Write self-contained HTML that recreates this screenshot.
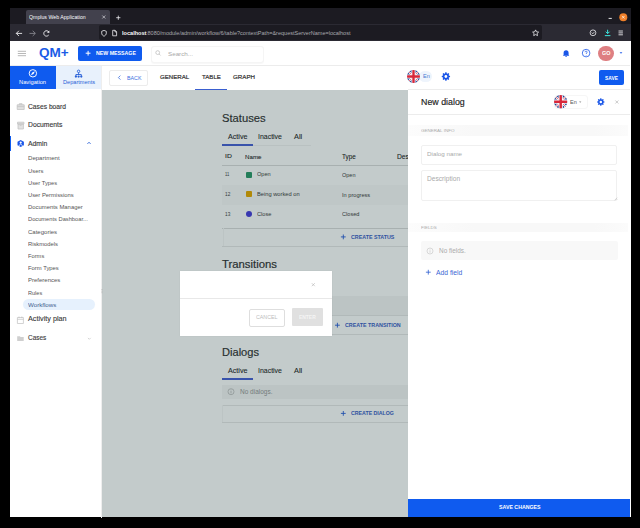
<!DOCTYPE html>
<html><head><meta charset="utf-8"><style>
html,body{margin:0;padding:0;background:#000;width:640px;height:528px;overflow:hidden;font-family:"Liberation Sans",sans-serif}
.r{position:absolute}
.t{position:absolute;white-space:nowrap;line-height:1;transform-origin:0 50%}
svg{position:absolute;overflow:visible}
</style></head><body>
<div class="r" style="left:10px;top:8px;width:620.5px;height:16px;background:#1c1b22;"></div>
<div class="r" style="left:26px;top:10px;width:84px;height:14px;background:#42414d;border-radius:2px 2px 0 0"></div>
<div class="r" style="left:10px;top:24px;width:620.5px;height:16.6px;background:#2b2a33;"></div>
<div class="r" style="left:98.5px;top:25.3px;width:443.5px;height:14.3px;background:#1c1b22;border-radius:2px"></div>
<div class="r" style="left:10px;top:40.6px;width:620.5px;height:476.4px;background:#ffffff;"></div>
<div class="r" style="left:10px;top:65px;width:620px;height:1px;background:#ececec;"></div>
<div class="r" style="left:78px;top:45.5px;width:63.5px;height:15px;background:#0f5bef;border-radius:2px"></div>
<div class="r" style="left:150.5px;top:45.5px;width:113.5px;height:17.5px;background:#fff;border:1px solid #f5f5f5;box-sizing:border-box;border-radius:3px;box-shadow:0 0.5px 1px rgba(0,0,0,0.03)"></div>
<div class="r" style="left:598px;top:45.5px;width:15.5px;height:15.5px;background:#de7f82;border-radius:50%"></div>
<div class="r" style="left:10px;top:65.5px;width:45.5px;height:23px;background:#0f5bef;"></div>
<div class="r" style="left:55.5px;top:65.5px;width:46px;height:23px;background:#e8f1fc;"></div>
<div class="r" style="left:101.3px;top:65.5px;width:0.8px;height:452px;background:#eeeeee;"></div>
<div class="r" style="left:10px;top:136px;width:1.3px;height:15px;background:#0f5bef;"></div>
<div class="r" style="left:22.8px;top:299.2px;width:72.5px;height:11px;background:#e6f1fd;border-radius:6px"></div>
<div class="r" style="left:108.5px;top:70px;width:39.5px;height:15.5px;background:#fff;border:1px solid #ececec;box-sizing:border-box;border-radius:2px"></div>
<div class="r" style="left:195px;top:88.8px;width:31.5px;height:1.2px;background:#3a5fd0;"></div>
<div class="r" style="left:418.5px;top:70.5px;width:13.5px;height:11.5px;background:#eef4fc;border-radius:6px"></div>
<div class="r" style="left:598.5px;top:70px;width:25.5px;height:15px;background:#0f5bef;border-radius:2px"></div>
<div id="content" style="position:absolute;left:0;top:0;width:640px;height:528px">
<div class="r" style="left:221.5px;top:144.3px;width:31.5px;height:1.3px;background:#4b63d6;"></div>
<div class="r" style="left:252.5px;top:144.6px;width:58px;height:0.6px;background:#f2f2f2;"></div>
<div class="r" style="left:221.5px;top:165px;width:187px;height:0.8px;background:#dcdcdc;"></div>
<div class="r" style="left:221.5px;top:184.8px;width:187px;height:20px;background:#fafafa;"></div>
<div class="r" style="left:246px;top:171.5px;width:6.2px;height:6.2px;background:#2f9a6a;border-radius:1px"></div>
<div class="r" style="left:246px;top:191.2px;width:6.2px;height:6.2px;background:#e8a900;border-radius:1px"></div>
<div class="r" style="left:246px;top:211px;width:6.4px;height:6.4px;background:#4a3fdc;border-radius:50%"></div>
<div class="r" style="left:221.5px;top:228.3px;width:187px;height:0.8px;background:#dcdcdc;"></div>
<div class="r" style="left:222.5px;top:228.3px;width:0.8px;height:18px;background:#f6f6f6;"></div>
<div class="r" style="left:221.5px;top:246px;width:187px;height:0.8px;background:#e8e8e8;"></div>
<div class="r" style="left:221.5px;top:295.5px;width:187px;height:20px;background:#f6f6f6;"></div>
<div class="r" style="left:221.5px;top:315.3px;width:187px;height:0.8px;background:#e8e8e8;"></div>
<div class="r" style="left:221.5px;top:334px;width:187px;height:0.8px;background:#e8e8e8;"></div>
<div class="r" style="left:221.5px;top:378.3px;width:31.5px;height:1.3px;background:#4b63d6;"></div>
<div class="r" style="left:221.5px;top:384.8px;width:187px;height:14px;background:#f6f6f6;"></div>
<div class="r" style="left:221.5px;top:404.8px;width:187px;height:0.8px;background:#e8e8e8;"></div>
<div class="r" style="left:222.3px;top:404.8px;width:0.8px;height:17px;background:#f6f6f6;"></div>
<div class="r" style="left:221.5px;top:421.5px;width:187px;height:0.8px;background:#e8e8e8;"></div>
<svg style="left:0;top:0" width="640" height="528" viewBox="0 0 640 528" fill="none">
<path d="M340.9 236.9h4.8M343.3 234.5v4.8" stroke="#2c5fd8" stroke-width="0.9"/>
<path d="M335 325.2h4.8M337.4 322.8v4.8" stroke="#2c5fd8" stroke-width="0.9"/>
<path d="M340.9 413.4h4.8M343.3 411v4.8" stroke="#2c5fd8" stroke-width="0.9"/>
<circle cx="231" cy="391.7" r="3" stroke="#aaa" stroke-width="0.6"/>
<path d="M231 391v2.4" stroke="#aaa" stroke-width="0.6"/><circle cx="231" cy="389.9" r="0.35" fill="#aaa"/>
</svg>
<div class="t" id="statuses" style="left:221.60px;top:113.32px;font-size:10.50px;font-weight:400;color:#333;transform:scaleX(1.0670);-webkit-text-stroke:0.15px #333;">Statuses</div>
<div class="t" id="sta" style="left:227.50px;top:132.75px;font-size:7.00px;font-weight:400;color:#2a2a2a;transform:scaleX(1.0215);-webkit-text-stroke:0.08px #2a2a2a;">Active</div>
<div class="t" id="sti" style="left:258.40px;top:132.75px;font-size:7.00px;font-weight:400;color:#2a2a2a;transform:scaleX(0.9930);-webkit-text-stroke:0.08px #2a2a2a;">Inactive</div>
<div class="t" id="stl" style="left:293.80px;top:132.75px;font-size:7.00px;font-weight:400;color:#2a2a2a;transform:scaleX(1.0524);-webkit-text-stroke:0.08px #2a2a2a;">All</div>
<div class="t" id="hid" style="left:224.50px;top:154.46px;font-size:5.80px;font-weight:400;color:#222;transform:scaleX(1.1779);-webkit-text-stroke:0.07px #222;">ID</div>
<div class="t" id="hname" style="left:245.00px;top:153.94px;font-size:6.10px;font-weight:400;color:#222;transform:scaleX(1.0141);-webkit-text-stroke:0.07px #222;">Name</div>
<div class="t" id="htype" style="left:342.00px;top:153.94px;font-size:6.30px;font-weight:400;color:#222;transform:scaleX(1.0036);-webkit-text-stroke:0.07px #222;">Type</div>
<div class="t" id="hdes" style="left:397.00px;top:153.94px;font-size:6.30px;font-weight:400;color:#222;transform:scaleX(1.0647);-webkit-text-stroke:0.07px #222;">Description</div>
<div class="t" id="r1id" style="left:224.60px;top:172.23px;font-size:5.40px;font-weight:400;color:#444;transform:scaleX(0.7533);">11</div>
<div class="t" id="r1n" style="left:256.80px;top:172.03px;font-size:5.40px;font-weight:400;color:#444;transform:scaleX(1.0348);">Open</div>
<div class="t" id="r1t" style="left:342.00px;top:172.63px;font-size:5.40px;font-weight:400;color:#444;transform:scaleX(1.0192);">Open</div>
<div class="t" id="r2id" style="left:224.60px;top:191.83px;font-size:5.40px;font-weight:400;color:#444;transform:scaleX(0.8800);">12</div>
<div class="t" id="r2n" style="left:256.80px;top:191.66px;font-size:5.70px;font-weight:400;color:#444;transform:scaleX(1.0067);">Being worked on</div>
<div class="t" id="r2t" style="left:342.00px;top:192.52px;font-size:5.60px;font-weight:400;color:#444;transform:scaleX(1.0059);">In progress</div>
<div class="t" id="r3id" style="left:224.60px;top:211.73px;font-size:5.40px;font-weight:400;color:#444;transform:scaleX(0.8800);">13</div>
<div class="t" id="r3n" style="left:256.80px;top:211.62px;font-size:5.60px;font-weight:400;color:#444;transform:scaleX(1.0098);">Close</div>
<div class="t" id="r3t" style="left:342.00px;top:212.33px;font-size:5.40px;font-weight:400;color:#444;transform:scaleX(1.0398);">Closed</div>
<div class="t" id="cstatus" style="left:351.00px;top:234.90px;font-size:5.30px;font-weight:700;color:#3d62c8;transform:scaleX(1.0037);">CREATE STATUS</div>
<div class="t" id="transitions" style="left:221.60px;top:258.83px;font-size:10.50px;font-weight:400;color:#333;transform:scaleX(1.0772);-webkit-text-stroke:0.17px #333;">Transitions</div>
<div class="t" id="ctrans" style="left:344.70px;top:323.20px;font-size:5.30px;font-weight:700;color:#3d62c8;transform:scaleX(1.0089);">CREATE TRANSITION</div>
<div class="t" id="dialogs" style="left:221.60px;top:346.73px;font-size:10.50px;font-weight:400;color:#333;transform:scaleX(1.0558);-webkit-text-stroke:0.17px #333;">Dialogs</div>
<div class="t" id="dla" style="left:227.50px;top:367.15px;font-size:7.00px;font-weight:400;color:#2a2a2a;transform:scaleX(1.0215);-webkit-text-stroke:0.08px #2a2a2a;">Active</div>
<div class="t" id="dli" style="left:258.40px;top:367.15px;font-size:7.00px;font-weight:400;color:#2a2a2a;transform:scaleX(0.9930);-webkit-text-stroke:0.08px #2a2a2a;">Inactive</div>
<div class="t" id="dll" style="left:293.80px;top:367.15px;font-size:7.00px;font-weight:400;color:#2a2a2a;transform:scaleX(1.0524);-webkit-text-stroke:0.08px #2a2a2a;">All</div>
<div class="t" id="nodialogs" style="left:239.50px;top:388.78px;font-size:6.40px;font-weight:400;color:#999;transform:scaleX(1.0168);">No dialogs.</div>
<div class="t" id="cdialog" style="left:351.00px;top:411.45px;font-size:5.20px;font-weight:700;color:#3d62c8;transform:scaleX(1.0084);">CREATE DIALOG</div>
</div>
<div class="r" style="left:102.4px;top:90.2px;width:305.6px;height:426.8px;background:rgba(0,34,34,0.235);"></div>
<div class="r" style="left:179.6px;top:270.5px;width:152.4px;height:65.1px;background:#fff;box-shadow:0 0 1.5px rgba(0,0,0,0.08)"></div><div class="r" style="left:179.6px;top:297.9px;width:152.4px;height:0.8px;background:#e8e8e8;"></div><div class="r" style="left:249.3px;top:308.5px;width:36px;height:18px;background:#fff;border:1px solid #dedede;box-sizing:border-box;border-radius:2px"></div><div class="r" style="left:292px;top:308px;width:30.5px;height:18px;background:#e0e0e0;border-radius:1px"></div>
<div class="r" style="left:408px;top:89px;width:222px;height:428px;background:#ffffff;"></div>
<div class="r" style="left:408px;top:88.5px;width:222px;height:0.8px;background:#ececec;"></div>
<div class="r" style="left:408px;top:114px;width:222px;height:0.8px;background:#ececec;"></div>
<div class="r" style="left:408px;top:125px;width:220px;height:10.5px;background:linear-gradient(90deg,#fcfcfc,#f8f8f8 30%,#f8f8f8 85%,#fbfbfb);"></div>
<div class="r" style="left:420.5px;top:144.5px;width:197px;height:20.5px;background:#fff;border:1px solid #f0f0f0;box-sizing:border-box;border-radius:2px;width:196.7px"></div>
<div class="r" style="left:420.5px;top:169.7px;width:196.7px;height:31.3px;background:#fff;border:1px solid #f0f0f0;box-sizing:border-box;border-radius:2px"></div>
<div class="r" style="left:408px;top:222.5px;width:220px;height:9.5px;background:linear-gradient(90deg,#fcfcfc,#f8f8f8 30%,#f8f8f8 85%,#fbfbfb);"></div>
<div class="r" style="left:420.5px;top:241.2px;width:197px;height:18.8px;background:#f8f8f8;border-radius:2px"></div>
<div class="r" style="left:554px;top:95.4px;width:34px;height:13.3px;background:#fff;border:1px solid #f6f6f6;box-sizing:border-box;border-radius:3px"></div>
<div class="r" style="left:408px;top:499px;width:222px;height:18px;background:#0f5bef;"></div>
<div class="t" id="tab" style="left:29.00px;top:14.83px;font-size:5.40px;font-weight:400;color:#fbfbfe;transform:scaleX(0.9672);">Qmplus Web Application</div>
<div class="t" id="url1" style="left:122.00px;top:30.58px;font-size:5.50px;font-weight:700;color:#fbfbfe;transform:scaleX(1.0120);">localhost</div>
<div class="t" id="url2" style="left:146.00px;top:30.58px;font-size:5.50px;font-weight:400;color:#a9a9b0;transform:scaleX(1.0025);">:8080/module/admin/workflow/6/table?contextPath=&amp;requestServerName=localhost</div>
<div class="t" id="qm" style="left:39.40px;top:45.73px;font-size:13.40px;font-weight:700;color:#1a5ce6;transform:scaleX(1.0099);">QM+</div>
<div class="t" id="newmsg" style="left:96.00px;top:51.25px;font-size:5.20px;font-weight:700;color:#ffffff;transform:scaleX(1.0106);">NEW MESSAGE</div>
<div class="t" id="search" style="left:167.50px;top:50.69px;font-size:6.20px;font-weight:400;color:#a8a8a8;transform:scaleX(1.0095);">Search...</div>
<div class="t" id="go" style="left:601.50px;top:51.25px;font-size:5.40px;font-weight:700;color:#ffffff;transform:scaleX(1.0052);">GO</div>
<div class="t" id="nav" style="left:19.40px;top:80.06px;font-size:5.70px;font-weight:400;color:#ffffff;transform:scaleX(1.0069);">Navigation</div>
<div class="t" id="dept" style="left:62.80px;top:79.87px;font-size:5.50px;font-weight:400;color:#2a62d8;transform:scaleX(1.0174);">Departments</div>
<div class="t" id="back" style="left:127.00px;top:75.65px;font-size:5.20px;font-weight:400;color:#3b6fe0;transform:scaleX(1.0201);">BACK</div>
<div class="t" id="general" style="left:159.75px;top:74.16px;font-size:6.20px;font-weight:400;color:#333;transform:scaleX(0.9886);-webkit-text-stroke:0.20px #333;">GENERAL</div>
<div class="t" id="table" style="left:201.60px;top:74.16px;font-size:6.20px;font-weight:400;color:#333;transform:scaleX(0.9861);-webkit-text-stroke:0.20px #333;">TABLE</div>
<div class="t" id="graph" style="left:232.50px;top:74.16px;font-size:6.20px;font-weight:400;color:#333;transform:scaleX(0.9991);-webkit-text-stroke:0.20px #333;">GRAPH</div>
<div class="t" id="en1" style="left:423.00px;top:74.17px;font-size:5.50px;font-weight:400;color:#4a78d0;transform:scaleX(1.0168);">En</div>
<div class="t" id="save" style="left:604.80px;top:75.65px;font-size:5.00px;font-weight:700;color:#ffffff;transform:scaleX(0.9728);">SAVE</div>
<div class="t" id="casesboard" style="left:28.20px;top:104.17px;font-size:6.60px;font-weight:400;color:#383838;transform:scaleX(1.0173);-webkit-text-stroke:0.12px #383838;">Cases board</div>
<div class="t" id="documents" style="left:28.20px;top:122.37px;font-size:6.60px;font-weight:400;color:#383838;transform:scaleX(1.0295);-webkit-text-stroke:0.12px #383838;">Documents</div>
<div class="t" id="admin" style="left:28.20px;top:140.67px;font-size:6.60px;font-weight:400;color:#383838;transform:scaleX(1.0344);-webkit-text-stroke:0.12px #383838;">Admin</div>
<div class="t" id="sub0" style="left:28.20px;top:156.45px;font-size:5.90px;font-weight:400;color:#555;transform:scaleX(1.0294);">Department</div>
<div class="t" id="sub1" style="left:28.20px;top:168.75px;font-size:5.90px;font-weight:400;color:#555;transform:scaleX(1.0055);">Users</div>
<div class="t" id="sub2" style="left:28.20px;top:180.75px;font-size:5.90px;font-weight:400;color:#555;transform:scaleX(0.9789);">User Types</div>
<div class="t" id="sub3" style="left:28.20px;top:193.06px;font-size:5.90px;font-weight:400;color:#555;transform:scaleX(0.9894);">User Permissions</div>
<div class="t" id="sub4" style="left:28.20px;top:205.16px;font-size:5.90px;font-weight:400;color:#555;transform:scaleX(0.9997);">Documents Manager</div>
<div class="t" id="sub5" style="left:28.20px;top:217.35px;font-size:5.90px;font-weight:400;color:#555;transform:scaleX(0.9707);">Documents Dashboar...</div>
<div class="t" id="sub6" style="left:28.20px;top:229.66px;font-size:5.90px;font-weight:400;color:#555;transform:scaleX(1.0204);">Categories</div>
<div class="t" id="sub7" style="left:28.20px;top:241.75px;font-size:5.90px;font-weight:400;color:#555;transform:scaleX(0.9840);">Riskmodels</div>
<div class="t" id="sub8" style="left:28.20px;top:254.06px;font-size:5.90px;font-weight:400;color:#555;transform:scaleX(0.9734);">Forms</div>
<div class="t" id="sub9" style="left:28.20px;top:265.95px;font-size:5.90px;font-weight:400;color:#555;transform:scaleX(0.9925);">Form Types</div>
<div class="t" id="sub10" style="left:28.20px;top:278.45px;font-size:5.90px;font-weight:400;color:#555;transform:scaleX(1.0162);">Preferences</div>
<div class="t" id="sub11" style="left:28.20px;top:290.65px;font-size:5.90px;font-weight:400;color:#555;transform:scaleX(0.9458);">Rules</div>
<div class="t" id="sub12" style="left:28.20px;top:302.56px;font-size:5.90px;font-weight:400;color:#3f5f8f;transform:scaleX(1.0455);">Workflows</div>
<div class="t" id="activity" style="left:28.20px;top:316.36px;font-size:6.80px;font-weight:400;color:#383838;transform:scaleX(1.0638);-webkit-text-stroke:0.10px #383838;">Activity plan</div>
<div class="t" id="cases" style="left:28.20px;top:335.26px;font-size:6.80px;font-weight:400;color:#383838;transform:scaleX(0.9508);-webkit-text-stroke:0.10px #383838;">Cases</div>
<div class="t" id="cancel" style="left:256.40px;top:314.95px;font-size:5.20px;font-weight:400;color:#bdbdbd;transform:scaleX(1.0227);">CANCEL</div>
<div class="t" id="enter" style="left:299.00px;top:315.15px;font-size:5.00px;font-weight:700;color:#f4f4f4;transform:scaleX(0.9847);">ENTER</div>
<div class="t" id="newdialog" style="left:420.60px;top:97.77px;font-size:8.60px;font-weight:400;color:#222;transform:scaleX(1.0280);-webkit-text-stroke:0.15px #222;">New dialog</div>
<div class="t" id="en2" style="left:569.70px;top:99.63px;font-size:5.40px;font-weight:400;color:#555;transform:scaleX(1.0224);">En</div>
<div class="t" id="geninfo" style="left:420.60px;top:128.94px;font-size:4.40px;font-weight:400;color:#aaa;transform:scaleX(1.0302);">GENERAL INFO</div>
<div class="t" id="dname" style="left:426.80px;top:151.19px;font-size:6.20px;font-weight:400;color:#aaa;transform:scaleX(1.0101);">Dialog name</div>
<div class="t" id="desc" style="left:426.80px;top:176.13px;font-size:6.30px;font-weight:400;color:#aaa;transform:scaleX(1.0517);">Description</div>
<div class="t" id="fields" style="left:420.60px;top:225.94px;font-size:4.40px;font-weight:400;color:#aaa;transform:scaleX(1.0251);">FIELDS</div>
<div class="t" id="nofields" style="left:439.00px;top:248.13px;font-size:6.30px;font-weight:400;color:#aaa;transform:scaleX(1.0176);">No fields.</div>
<div class="t" id="addfield" style="left:436.25px;top:269.52px;font-size:6.70px;font-weight:400;color:#3a66d4;transform:scaleX(1.0100);">Add field</div>
<div class="t" id="savech" style="left:498.50px;top:505.35px;font-size:5.20px;font-weight:700;color:#ffffff;transform:scaleX(1.0121);">SAVE CHANGES</div>
<svg style="left:407.10px;top:69.90px" width="13.00" height="13.00" viewBox="0 0 60 60">
<defs><clipPath id="c413"><circle cx="30" cy="30" r="30"/></clipPath></defs>
<g clip-path="url(#c413)">
<rect width="60" height="60" fill="#22408f"/>
<path d="M0 0L60 60M60 0L0 60" stroke="#fff" stroke-width="9"/>
<path d="M0 0L60 60M60 0L0 60" stroke="#d8273a" stroke-width="3"/>
<path d="M30 0v60M0 30h60" stroke="#fff" stroke-width="19"/>
<path d="M30 0v60M0 30h60" stroke="#d8273a" stroke-width="11"/>
</g></svg><svg style="left:554.10px;top:95.30px" width="13.40" height="13.40" viewBox="0 0 60 60">
<defs><clipPath id="c560"><circle cx="30" cy="30" r="30"/></clipPath></defs>
<g clip-path="url(#c560)">
<rect width="60" height="60" fill="#22408f"/>
<path d="M0 0L60 60M60 0L0 60" stroke="#fff" stroke-width="9"/>
<path d="M0 0L60 60M60 0L0 60" stroke="#d8273a" stroke-width="3"/>
<path d="M30 0v60M0 30h60" stroke="#fff" stroke-width="19"/>
<path d="M30 0v60M0 30h60" stroke="#d8273a" stroke-width="11"/>
</g></svg>
<svg style="left:0;top:0" width="640" height="528" viewBox="0 0 640 528" fill="none">
<!-- browser chrome -->
<path d="M102.3 15.5l3 3M105.3 15.5l-3 3" stroke="#d8d8de" stroke-width="0.7"/>
<path d="M116.2 17.7h4.2M118.3 15.6v4.2" stroke="#fbfbfe" stroke-width="0.75"/>
<path d="M608.6 18.4h3.2" stroke="#fbfbfe" stroke-width="0.9"/>
<circle cx="623.3" cy="17.2" r="4" fill="#f0802a"/>
<path d="M622 15.9l2.6 2.6M624.6 15.9l-2.6 2.6" stroke="#fff" stroke-width="0.7"/>
<path d="M22.1 33.4H16.3M18.9 30.8l-2.6 2.6 2.6 2.6" stroke="#fbfbfe" stroke-width="0.85"/>
<path d="M29.5 33.4h5.8M32.7 30.8l2.6 2.6-2.6 2.6" stroke="#8b8b94" stroke-width="0.85"/>
<path d="M48.9 32.2A2.7 2.7 0 1 0 48.7 35" stroke="#fbfbfe" stroke-width="0.85"/>
<path d="M49.3 30.4v2.3h-2.3z" fill="#fbfbfe"/>
<path d="M104 30.4l2.3 0.9v1.8c0 1.5-1 2.6-2.3 3.1-1.3-0.5-2.3-1.6-2.3-3.1v-1.8z" stroke="#fbfbfe" stroke-width="0.75"/>
<path d="M112.7 30.3h2.4l1.5 1.5v4h-3.9z M115 30.3v1.6h1.6" stroke="#fbfbfe" stroke-width="0.75"/>
<path d="M535.6 29.9l0.9 1.9 2.1 0.3-1.5 1.4 0.4 2.1-1.9-1-1.9 1 0.4-2.1-1.5-1.4 2.1-0.3z" stroke="#fbfbfe" stroke-width="0.75"/>
<circle cx="593" cy="32.8" r="2.9" stroke="#fbfbfe" stroke-width="0.75"/>
<path d="M591.6 32.6l1.3 1.2 1.6-2" stroke="#fbfbfe" stroke-width="0.7"/>
<path d="M607.6 29.8v3.6M605.8 31.8l1.8 1.8 1.8-1.8M604.9 35.6h5.4" stroke="#54ffbd" stroke-width="0.9"/>
<path d="M607.6 29.8v3.6M605.8 31.8l1.8 1.8 1.8-1.8M604.9 35.6h5.4" stroke="#2ec8e8" stroke-width="0.9" opacity="0.7"/>
<path d="M618.5 31h4.4M618.5 32.9h4.4M618.5 34.8h4.4" stroke="#fbfbfe" stroke-width="0.8"/>
<!-- app header -->
<path d="M17.8 51.3h8.2M17.8 53.5h8.2M17.8 55.7h8.2" stroke="#9a9a9a" stroke-width="0.7"/>
<path d="M85.7 53.2h4.8M88.1 50.8v4.8" stroke="#fff" stroke-width="1"/>
<circle cx="157.7" cy="52.6" r="1.9" stroke="#b8b8b8" stroke-width="0.7"/>
<path d="M159.1 54l1.5 1.5" stroke="#b8b8b8" stroke-width="0.7"/>
<path d="M566.1 50.3c-1.6 0-2.5 1.2-2.5 2.6v1.9l-0.7 1h6.4l-0.7-1v-1.9c0-1.4-0.9-2.6-2.5-2.6z M565.2 56.2h1.8a0.9 0.9 0 0 1-1.8 0z" fill="#1a56e8"/>
<circle cx="586.1" cy="53.1" r="3.8" stroke="#1a56e8" stroke-width="0.8"/>
<path d="M585 52.2c0-0.7 0.5-1.1 1.1-1.1s1.1 0.4 1.1 1c0 0.9-1.1 0.9-1.1 1.9" stroke="#1a56e8" stroke-width="0.7"/>
<circle cx="586.1" cy="55.3" r="0.4" fill="#1a56e8"/>
<path d="M619.6 52.3h2.8l-1.4 1.4z" fill="#1a56e8"/>
<!-- sidebar tabs -->
<circle cx="32.9" cy="73.3" r="3.7" stroke="#fff" stroke-width="0.95"/>
<path d="M30.9 75.3l1.3-2.7 2.7-1.3-1.3 2.7z" fill="#fff"/>
<circle cx="78.6" cy="71.3" r="1.25" stroke="#2a62d8" stroke-width="0.9"/>
<path d="M78.6 72.5v2.2M75.9 76v-1.5h5.4v1.5" stroke="#2a62d8" stroke-width="0.9"/>
<circle cx="75.9" cy="76.6" r="1.15" fill="#2a62d8"/><circle cx="78.6" cy="76.6" r="1.15" fill="#2a62d8"/><circle cx="81.3" cy="76.6" r="1.15" fill="#2a62d8"/>
<!-- back chevron -->
<path d="M120.4 75.6l-2 2 2 2" stroke="#3b6fe0" stroke-width="0.8"/>
<!-- gear subheader -->
<g transform="translate(445.9 76.5)">
<path d="M2.97 -0.88 L4.15 -0.62 L4.15 0.62 L2.97 0.88 L2.72 1.48 L3.38 2.50 L2.50 3.38 L1.48 2.72 L0.88 2.97 L0.62 4.15 L-0.62 4.15 L-0.88 2.97 L-1.48 2.72 L-2.50 3.38 L-3.38 2.50 L-2.72 1.48 L-2.97 0.88 L-4.15 0.62 L-4.15 -0.62 L-2.97 -0.88 L-2.72 -1.48 L-3.38 -2.50 L-2.50 -3.38 L-1.48 -2.72 L-0.88 -2.97 L-0.62 -4.15 L0.62 -4.15 L0.88 -2.97 L1.48 -2.72 L2.50 -3.38 L3.38 -2.50 L2.72 -1.48Z" fill="#1a56e8"/>
<circle r="1.4" fill="#fff"/>
</g>
<g transform="translate(600.8 102) scale(0.88)">
<path d="M2.97 -0.88 L4.15 -0.62 L4.15 0.62 L2.97 0.88 L2.72 1.48 L3.38 2.50 L2.50 3.38 L1.48 2.72 L0.88 2.97 L0.62 4.15 L-0.62 4.15 L-0.88 2.97 L-1.48 2.72 L-2.50 3.38 L-3.38 2.50 L-2.72 1.48 L-2.97 0.88 L-4.15 0.62 L-4.15 -0.62 L-2.97 -0.88 L-2.72 -1.48 L-3.38 -2.50 L-2.50 -3.38 L-1.48 -2.72 L-0.88 -2.97 L-0.62 -4.15 L0.62 -4.15 L0.88 -2.97 L1.48 -2.72 L2.50 -3.38 L3.38 -2.50 L2.72 -1.48Z" fill="#1a56e8"/>
<circle r="1.4" fill="#fff"/>
</g>
<!-- sidebar icons -->
<path d="M17.2 104.8h7v4.7h-7z M19.3 104.8v-1.1h2.8v1.1 M17.2 106.6h7" stroke="#c4c4c4" stroke-width="0.8" fill="#e0e0e0"/>
<path d="M17.5 122.2h6.4v1.8h-6.4z M18 124h5.4v5h-5.4z M19.8 125.3h1.8" stroke="#c4c4c4" stroke-width="0.8" fill="#e2e2e2"/>
<path d="M20.7 139.9l3.2 1.8v3.6l-3.2 1.8-3.2-1.8v-3.6z" fill="#1a56e8"/>
<circle cx="20.7" cy="142.6" r="1.1" fill="#fff"/>
<path d="M19.1 146.1c0.2-1.2 0.8-1.9 1.6-1.9s1.4 0.7 1.6 1.9" stroke="#fff" stroke-width="0.8"/>
<path d="M87.5 143.8l1.5-1.5 1.5 1.5" stroke="#2a62d8" stroke-width="1"/>
<path d="M17.4 317.5h6v6h-6z M17.4 319.3h6 M19 316.5v1.6 M21.8 316.5v1.6" stroke="#c0c0c0" stroke-width="0.7"/>
<path d="M17.2 336.3h2.6l0.8 0.8h3.1v4h-6.5z" fill="#cfcfcf"/>
<path d="M87.9 337.9l1.4 1.4 1.4-1.4" stroke="#bbb" stroke-width="0.6"/>
<path d="M102 289.5v0.1M102 291.1v0.1M102 292.7v0.1" stroke="#aaa" stroke-width="0.7" stroke-linecap="round"/>
<!-- modal x -->
<path d="M311.8 283.2l3 3M314.8 283.2l-3 3" stroke="#b0b0b0" stroke-width="0.6"/>
<!-- panel -->
<path d="M579 101.5h2.4l-1.2 1.2z" fill="#888"/>
<path d="M615.4 100.5l3 3M618.4 100.5l-3 3" stroke="#b5b5b5" stroke-width="0.7"/>
<path d="M614.6 200.3l2.6-2.6M616.2 200.3l1-1" stroke="#aaa" stroke-width="0.5"/>
<circle cx="430" cy="251" r="3" stroke="#c2c2c2" stroke-width="0.6"/>
<path d="M430 250.3v2.4" stroke="#c2c2c2" stroke-width="0.6"/><circle cx="430" cy="249.2" r="0.35" fill="#c2c2c2"/>
<path d="M425.9 272.2h4.8M428.3 269.8v4.8" stroke="#2f5fd0" stroke-width="0.8"/>
</svg>

</body></html>
